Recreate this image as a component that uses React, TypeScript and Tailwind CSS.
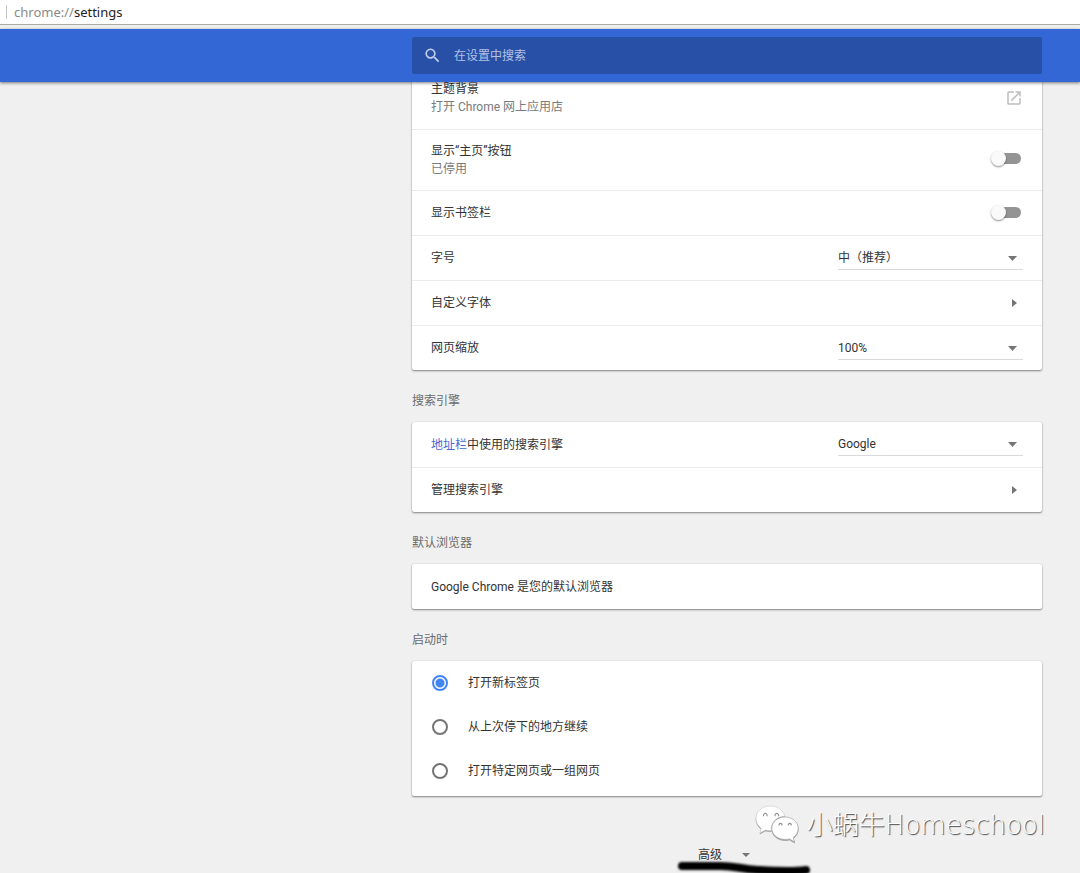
import React, { useState } from 'react';
import { MdOpenInNew, MdSearch } from 'react-icons/md';

interface SettingRowProps {
  children: React.ReactNode;
  tall?: boolean;
}

const SettingRow: React.FC<SettingRowProps> = ({ children, tall }) => (
  <div
    className={`flex items-center justify-between border-t border-[#ebebeb] px-[19px] first:border-t-0 ${
      tall ? 'h-[61px] pb-px' : 'h-[45px]'
    }`}
  >
    {children}
  </div>
);

const Card: React.FC<{ children: React.ReactNode }> = ({ children }) => (
  <div className="rounded-[2px] bg-white shadow-[0_1px_2px_rgba(0,0,0,0.45),0_0_1px_rgba(0,0,0,0.2)]">
    {children}
  </div>
);

interface SectionProps {
  title: string;
  children: React.ReactNode;
}

const Section: React.FC<SectionProps> = ({ title, children }) => (
  <section>
    <h2 className="pb-3 pt-[22px] text-[#6b6b6b]">{title}</h2>
    <Card>{children}</Card>
  </section>
);

interface ToggleProps {
  id: string;
}

const Toggle: React.FC<ToggleProps> = ({ id }) => {
  const [on, setOn] = useState(false);

  return (
    <input
      id={id}
      type="checkbox"
      role="switch"
      checked={on}
      onChange={() => setOn(!on)}
      className="relative mb-0.5 mr-0.5 h-[11px] w-7 cursor-pointer appearance-none rounded-full bg-[#949494] before:absolute before:-left-0.5 before:-top-0.5 before:size-[15px] before:rounded-full before:bg-[#fafafa] before:shadow-[0_1px_2px_rgba(0,0,0,0.45)] checked:bg-[#9dbdf9] checked:before:left-4 checked:before:bg-[#4285f4]"
    />
  );
};

interface DropdownProps {
  id: string;
  options: string[];
}

const Dropdown: React.FC<DropdownProps> = ({ id, options }) => (
  <div className="relative w-[185px]">
    <select
      id={id}
      className="block h-[23px] w-full cursor-pointer appearance-none border-b border-[#dadada] bg-transparent text-[#333] outline-none"
    >
      {options.map((option) => (
        <option key={option}>{option}</option>
      ))}
    </select>
    <svg
      width="9"
      height="5"
      viewBox="0 0 9 5"
      className="pointer-events-none absolute right-1.5 top-[9px] fill-[#757575]"
    >
      <path d="M0 0h9L4.500 5z" />
    </svg>
  </div>
);

interface SubpageButtonProps {
  label: string;
}

const SubpageButton: React.FC<SubpageButtonProps> = ({ label }) => (
  <button className="flex h-full w-full cursor-pointer items-center justify-between pr-1.5 text-left">
    {label}
    <svg width="5" height="8" viewBox="0 0 5 8" className="fill-[#757575]">
      <path d="M0 0v8l5-4z" />
    </svg>
  </button>
);

const startupOptions = ['打开新标签页', '从上次停下的地方继续', '打开特定网页或一组网页'];

const StartupOptions = () => {
  const [selected, setSelected] = useState(0);

  return (
    <div className="pb-[3px]">
      {startupOptions.map((option, i) => (
        <label key={option} className="flex h-[44px] cursor-pointer items-center gap-5 px-5">
          <input
            type="radio"
            name="startup"
            checked={selected === i}
            onChange={() => setSelected(i)}
            className="size-4 appearance-none rounded-full border-2 border-[#757575] checked:border-[#4285f4] checked:bg-[radial-gradient(circle,#4285f4_4px,transparent_5px)]"
          />
          {option}
        </label>
      ))}
    </div>
  );
};

const WechatMark = () => (
  <svg
    width="46"
    height="40"
    viewBox="0 0 46 40"
    className="drop-shadow-[0_1px_0_#9a9a9a]"
  >
    <path
      d="M15 1C7 1 1 6.500 1 13.500c0 4 2 7.300 5.200 9.700L5 28l5.500-3c1.500.4 3 .6 4.500.6h1.300C15.500 18 21 11.500 30 11.300 28.500 5 22.500 1 15 1z"
      fill="#fff"
      stroke="#c4c4c4"
      strokeWidth="0.500"
    />
    <path
      d="M30 12c-7.300 0-13.200 5-13.200 11.300S22.700 34.500 30 34.500c1.600 0 3-.2 4.400-.6l5.100 3-1.300-4.300c3-2.200 5-5.400 5-9.300C43.200 17 37.300 12 30 12z"
      fill="#fff"
      stroke="#a5a5a5"
      strokeWidth="0.700"
    />
    <g fill="none" stroke="#8f8f8f" strokeWidth="1.100">
      <path d="M8.800 11.200a1.800 1.800 0 1 1 3 0" />
      <path d="M20.300 11.200a1.800 1.800 0 1 1 3 0" />
      <path d="M24.200 20.600a1.500 1.500 0 1 1 2.600 0" />
      <path d="M33.500 20.600a1.500 1.500 0 1 1 2.600 0" />
    </g>
  </svg>
);

export default function App() {
  return (
    <div className="relative min-h-screen overflow-hidden bg-[#f0f0f0] font-[Roboto,'Noto_Sans_CJK_SC',sans-serif] text-[12px] leading-[18px] text-[#333]">
      <div className="flex h-[25px] items-center border-b border-[#a9aca3] bg-white pl-1.5 font-['Noto_Sans',sans-serif] text-[13px]">
        <span className="mr-[7px] h-[14px] w-px bg-[#c4c4c4]" />
        <span className="text-[#8a8a8a]">chrome://</span>
        <span className="text-[#222]">settings</span>
      </div>

      <header className="relative z-10 mt-1 bg-[#3367d6] py-2 pr-[38px] shadow-[0_1px_3px_rgba(0,0,0,0.5)]">
        <label className="ml-auto flex h-[37px] w-full max-w-[630px] items-center gap-3 rounded-[2px] bg-[#2850a7] pl-[11px]">
          <MdSearch size={19} className="text-[#c3d0ec]" />
          <input
            type="text"
            placeholder="在设置中搜索"
            aria-label="在设置中搜索"
            className="flex-1 bg-transparent text-white outline-none placeholder:text-[#b3c3e6]"
          />
        </label>
      </header>

      <main className="-mt-[14px] pr-[38px]">
        <div className="ml-auto w-full max-w-[630px]">
          <Card>
            <SettingRow tall>
              <div>
                <div>主题背景</div>
                <div className="text-[#7a7a7a]">打开 Chrome 网上应用店</div>
              </div>
              <button aria-label="打开 Chrome 网上应用店" className="cursor-pointer text-[#bdbdbd]">
                <MdOpenInNew size={18} />
              </button>
            </SettingRow>
            <SettingRow tall>
              <label htmlFor="home-button">
                <span className="block">显示“主页”按钮</span>
                <span className="block text-[#7a7a7a]">已停用</span>
              </label>
              <Toggle id="home-button" />
            </SettingRow>
            <SettingRow>
              <label htmlFor="bookmarks-bar">显示书签栏</label>
              <Toggle id="bookmarks-bar" />
            </SettingRow>
            <SettingRow>
              <label htmlFor="font-size">字号</label>
              <Dropdown id="font-size" options={['中（推荐）', '小', '大']} />
            </SettingRow>
            <SettingRow>
              <SubpageButton label="自定义字体" />
            </SettingRow>
            <SettingRow>
              <label htmlFor="page-zoom">网页缩放</label>
              <Dropdown id="page-zoom" options={['100%', '125%', '150%']} />
            </SettingRow>
          </Card>

          <Section title="搜索引擎">
            <SettingRow>
              <label htmlFor="search-engine">
                <a href="#omnibox" className="text-[#4a67d0]">
                  地址栏
                </a>
                中使用的搜索引擎
              </label>
              <Dropdown id="search-engine" options={['Google', 'Bing']} />
            </SettingRow>
            <SettingRow>
              <SubpageButton label="管理搜索引擎" />
            </SettingRow>
          </Section>

          <Section title="默认浏览器">
            <SettingRow>Google Chrome 是您的默认浏览器</SettingRow>
          </Section>

          <Section title="启动时">
            <StartupOptions />
          </Section>

          <div className="relative mt-[50px] flex justify-center pr-1.5">
            <button className="flex cursor-pointer items-center gap-5">
              高级
              <svg width="8" height="4" viewBox="0 0 8 4" className="fill-[#757575]">
                <path d="M0 0h8L4 4z" />
              </svg>
            </button>
            {/* marker stroke under the button */}
            <svg
              width="140"
              height="20"
              viewBox="0 0 140 20"
              className="pointer-events-none absolute left-[262px] top-3 blur-[1px]"
            >
              <path
                d="M8 8L46 8C62 8 66 11 84 12S118 14 132 12"
                fill="none"
                stroke="#000"
                strokeWidth="8"
                strokeLinecap="round"
              />
            </svg>
          </div>
        </div>
      </main>

      <div className="pointer-events-none absolute bottom-7 right-[35px] flex items-center gap-1.5">
        <WechatMark />
        <span className="font-['DejaVu_Sans','Noto_Sans_CJK_SC',sans-serif] text-[26px] font-light leading-[38px] text-white [text-shadow:1px_1px_1px_#444]">
          小蜗牛Homeschool
        </span>
      </div>
    </div>
  );
}
